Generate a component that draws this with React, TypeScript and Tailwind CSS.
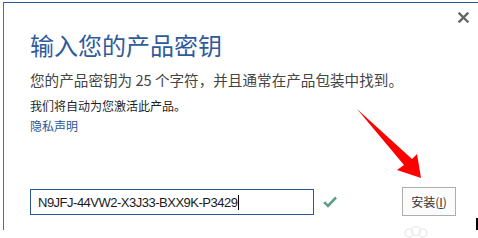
import React from "react";

export default function App() {
  return (
    <div className="relative w-[478px] h-[238px] bg-white overflow-hidden pt-[2px] pl-[3px] font-['Noto_Sans_CJK_SC',sans-serif]">
      <div className="relative w-[475px] h-[228px] border-t border-l border-t-[#2b579a] border-l-[#5d6b82] pl-[26px] pt-[30px] flex flex-col">
        <svg className="absolute left-[454px] top-[9px]" width="11" height="11" viewBox="0 0 11 11">
          <path d="M1.5 1.5 L9.5 9.5 M9.5 1.5 L1.5 9.5" stroke="#666666" strokeWidth="2.4" strokeLinecap="square" />
        </svg>
        <h1 className="text-[24px] leading-[24px] text-[#2f5b9c] font-normal">输入您的产品密钥</h1>
        <p className="mt-[13px] text-[14.6px] leading-[20px] text-[#444444]">
          您的产品密钥为 25 个字符，并且通常在产品包装中找到。
        </p>
        <p className="mt-[8px] text-[12px] leading-[16px] text-[#1f1f1f]">我们将自动为您激活此产品。</p>
        <a className="mt-[4px] text-[12px] leading-[16px] text-[#2b579a] w-fit">隐私声明</a>
        <div className="mt-[53px] flex items-start">
          <div className="mt-[2px] w-[284px] h-[26px] border border-[#2b579a] flex items-center pl-[7px]">
            <span className="font-['Liberation_Sans',sans-serif] text-[13px] tracking-[-0.5px] text-[#1a1a1a] leading-none">
              N9JFJ-44VW2-X3J33-BXX9K-P3429
            </span>
            <span className="ml-[1px] w-[1px] h-[15px] bg-black" />
          </div>
          <svg className="ml-[9px] mt-[9px]" width="14" height="12" viewBox="0 0 14 12">
            <path d="M1.2 6.2 L5 10 L13 1.5" fill="none" stroke="#5e9f86" strokeWidth="2.6" />
          </svg>
          <button className="ml-[65px] w-[54px] h-[29px] border border-[#adadad] bg-[#fbfbfb] text-[12px] text-[#333333] flex items-center justify-center leading-none">
            安装(<span className="underline">I</span>)
          </button>
        </div>
      </div>
      <svg className="absolute left-0 top-0 pointer-events-none" width="478" height="238" viewBox="0 0 478 238">
        <polygon points="357,109 412,159 417,154 421,178 397,170 404,165" fill="#ff0000" />
        <g fill="none" stroke="#ececec" strokeWidth="1.5">
          <circle cx="409" cy="233" r="4" />
          <circle cx="416" cy="231" r="4.5" />
          <circle cx="423" cy="233" r="4" />
        </g>
      </svg>
      <div className="absolute left-[476px] top-[218px] w-[2px] h-[12px] bg-black" />
    </div>
  );
}
